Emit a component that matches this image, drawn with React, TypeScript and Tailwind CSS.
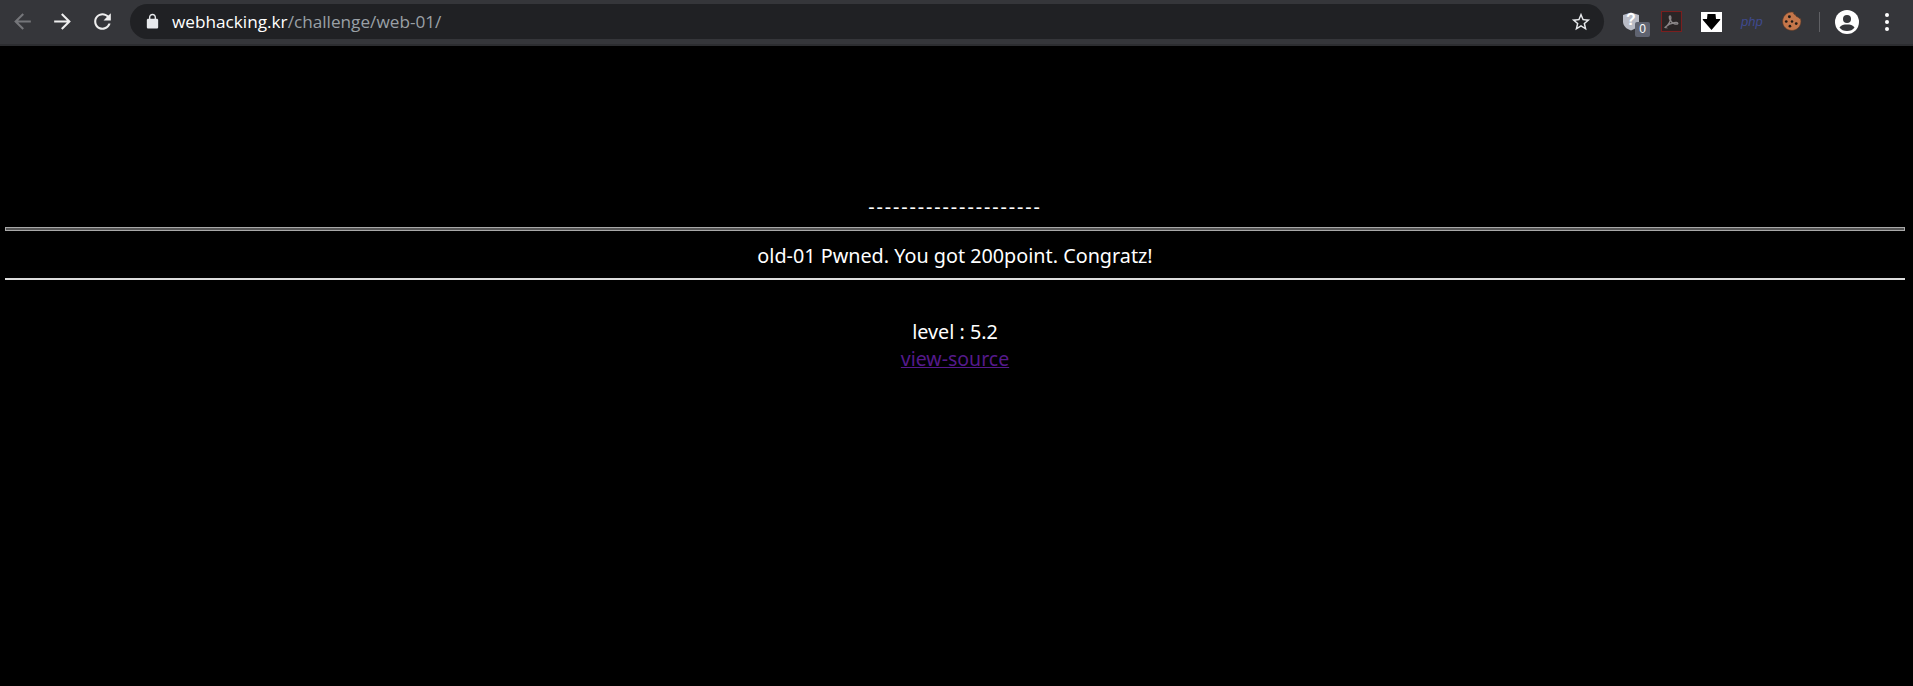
import { useId } from "react";

const ARROW_BACK = "M20 11H7.83l5.59-5.59L12 4l-8 8 8 8 1.41-1.41L7.83 13H20v-2z";
const ARROW_FORWARD = "M12 4l-1.41 1.41L16.17 11H4v2h12.17l-5.58 5.59L12 20l8-8z";
const RELOAD =
  "M17.65 6.35C16.2 4.9 14.21 4 12 4c-4.42 0-7.99 3.58-7.99 8s3.57 8 7.99 8c3.73 0 6.84-2.55 7.73-6h-2.08c-.82 2.33-3.04 4-5.65 4-3.31 0-6-2.69-6-6s2.69-6 6-6c1.66 0 3.14.69 4.22 1.78L13 11h7V4l-2.35 2.35z";
const STAR =
  "M22 9.24l-7.19-.62L12 2 9.19 8.63 2 9.24l5.46 4.73L5.82 21 12 17.27 18.18 21l-1.63-7.03L22 9.24zM12 15.4l-3.76 2.27 1-4.28-3.32-2.88 4.38-.38L12 6.1l1.71 4.04 4.38.38-3.32 2.88 1 4.28L12 15.4z";
const LOCK =
  "M18 8h-1V6c0-2.76-2.24-5-5-5S7 3.24 7 6v2H6c-1.1 0-2 .9-2 2v10c0 1.1.9 2 2 2h12c1.1 0 2-.9 2-2V10c0-1.1-.9-2-2-2zM9 8V6c0-1.66 1.34-3 3-3s3 1.34 3 3v2H9z";

function Glyph({ d, className }: { d: string; className: string }) {
  return (
    <svg viewBox="0 0 24 24" fill="currentColor" className={className}>
      <path d={d} />
    </svg>
  );
}

function ShieldExt() {
  return (
    <div className="relative h-[22px] w-[22px]">
      <svg viewBox="0 0 20 20" className="h-[21px] w-[20px]">
        <path d="M10 1l8 2.6v6.2c0 4.6-3.4 7.8-8 9.2-4.6-1.4-8-4.6-8-9.2V3.6z" fill="#b9bcc6" />
      </svg>
      <span className="absolute left-[5px] top-[-1px] font-['Liberation_Sans',sans-serif] text-[16px] font-bold leading-[20px] text-white">?</span>
      <span className="absolute left-[14px] top-[11px] flex h-[15px] w-[15px] items-center justify-center rounded-[2px] bg-[#5f6370] font-['Liberation_Sans',sans-serif] text-[12px] leading-none text-white">0</span>
    </div>
  );
}

function AcrobatExt() {
  return (
    <svg viewBox="0 0 20 20" className="h-[21px] w-[21px]">
      <rect x="0.5" y="0.5" width="19" height="19" fill="#2a2526" stroke="#7a1f1f" strokeWidth="1" />
      <path
        d="M4 15.5c2.5-1.5 4.2-4.4 5.1-7.2.4-1.3.5-3.6-.5-3.6-1 0-.7 2.2-.2 3.3 1 2.1 2.6 3.6 4.4 4.2 1.3.4 3.3.4 3.2-.5-.1-.9-2.3-.8-3.6-.5-2.800.6-5.600 1.800-7.300 3.400-.6.600-1 1.200-.6 1.200z"
        fill="none"
        stroke="#8a8587"
        strokeWidth="1.3"
      />
    </svg>
  );
}

function DownloadExt() {
  return (
    <svg viewBox="0 0 21 20" className="h-[20px] w-[21px]">
      <rect width="21" height="20" fill="#fff" />
      <path d="M6.500 2h8l.5 5h3.500c1 0 1 .6.4 1.300L10.500 18 2.100 8.300C1.500 7.600 1.500 7 2.500 7H6z" fill="#000" />
    </svg>
  );
}

function CookieExt() {
  return (
    <svg viewBox="0 0 20 20" className="h-[21px] w-[21px]">
      <path
        d="M10 1c.6 0 1.400.1 2 .3-.3 1.300.6 2.400 1.900 2.300.1 1.300 1.200 2.300 2.500 2.100.3 1 1.100 1.500 2.100 1.400.3.900.5 1.900.5 2.900 0 4.800-4 8.500-8.500 8.500C5.300 18.500 1.500 14.700 1.500 10S5.300 1 10 1z"
        fill="#c4764a"
        stroke="#5b3a28"
        strokeWidth="0.6"
      />
      <circle cx="8" cy="5.500" r="1.400" fill="#1f1a17" />
      <circle cx="5" cy="10" r="1.300" fill="#1f1a17" />
      <circle cx="10.500" cy="10" r="1.200" fill="#1f1a17" />
      <circle cx="14.500" cy="12" r="1.300" fill="#1f1a17" />
      <circle cx="8.500" cy="14.500" r="1.300" fill="#1f1a17" />
    </svg>
  );
}

function Avatar() {
  const maskId = useId();
  return (
    <svg viewBox="0 0 24 24" className="h-[24px] w-[24px]">
      <mask id={maskId}>
        <rect width="24" height="24" fill="#fff" />
        <circle cx="12" cy="9" r="4" fill="#000" />
        <path d="M4.500 17.500C6 15 9 14.500 12 14.500s6 .5 7.500 3C18 20 15 21 12 21s-6-1-7.500-3.500z" fill="#000" />
      </mask>
      <circle cx="12" cy="12" r="12" fill="#fff" mask={`url(#${maskId})`} />
    </svg>
  );
}

function Toolbar() {
  return (
    <div className="flex h-[46px] w-full shrink-0 items-start border-b-2 border-[#2c2d30] bg-[#35363a] pt-[4px]">
      <div className="flex h-[35px] items-center gap-[15px] pl-[10px] text-white">
        <Glyph d={ARROW_BACK} className="h-[25px] w-[25px] text-[#75767a]" />
        <Glyph d={ARROW_FORWARD} className="h-[25px] w-[25px] text-[#eeeeee]" />
        <Glyph d={RELOAD} className="h-[25px] w-[25px] text-[#eeeeee]" />
      </div>
      <div className="ml-[15px] flex h-[35px] w-[1474px] items-center rounded-full bg-[#202124] pl-[14px] pr-[12px]">
        <Glyph d={LOCK} className="h-[17px] w-[17px] text-[#e8eaed]" />
        <div className="ml-[11px] flex-1 font-['Open_Sans',sans-serif] text-[17.2px] leading-[24px] text-[#9aa0a6]">
          <span className="text-white">webhacking.kr</span>/challenge/web-01/
        </div>
        <Glyph d={STAR} className="h-[22px] w-[22px] text-[#e8eaed]" />
      </div>
      <div className="flex h-[35px] items-center">
        <div className="ml-[17px]"><ShieldExt /></div>
        <div className="ml-[18px]"><AcrobatExt /></div>
        <div className="ml-[19px]"><DownloadExt /></div>
        <span className="ml-[19px] w-[23px] font-['Liberation_Sans',sans-serif] text-[13px] italic text-[#3f4a8f]">php</span>
        <div className="ml-[17px]"><CookieExt /></div>
        <div className="ml-[17px] h-[20px] w-px bg-[#5f6064]" />
        <div className="ml-[15px]"><Avatar /></div>
        <div className="ml-[26px] flex flex-col gap-[3px]">
          <div className="h-[4px] w-[4px] rounded-full bg-white" />
          <div className="h-[4px] w-[4px] rounded-full bg-white" />
          <div className="h-[4px] w-[4px] rounded-full bg-white" />
        </div>
      </div>
    </div>
  );
}

export default function App() {
  return (
    <div className="flex h-[686px] w-[1913px] flex-col overflow-hidden bg-black font-['Noto_Sans',sans-serif]">
      <Toolbar />
      <div className="flex w-[1910px] flex-col items-center pt-[148px] text-[19.8px] leading-[26px] text-white">
        <div className="tracking-[1.9px]">---------------------</div>
        <div className="mt-[7px] h-[4px] w-[1900px] border border-[#a8a8a8] bg-[#555]" />
        <div className="mt-[12px]">old-01 Pwned. You got 200point. Congratz!</div>
        <div className="mt-[9px] h-[2px] w-[1900px] bg-[#ddd]" />
        <div className="mt-[39px]">level : 5.2</div>
        <a className="mt-[1px] text-[19.5px] text-[#551a8b] underline">view-source</a>
      </div>
    </div>
  );
}
